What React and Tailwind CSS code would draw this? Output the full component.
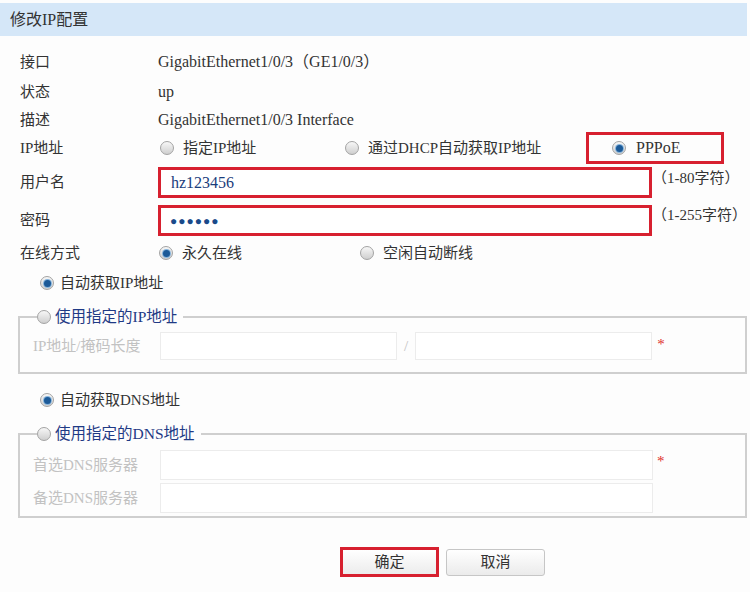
import React from 'react';

const Radio = ({ checked }) => (
  <span className="inline-flex w-[14px] h-[14px] shrink-0 items-center justify-center rounded-full border border-[#a3a3a3] bg-linear-to-b from-[#f7f7f7] to-[#cfcfcf]">
    {checked && <span className="w-[7px] h-[7px] rounded-full bg-[#1c5a98] ring-1 ring-[#86b4dc]" />}
  </span>
);

const Option = ({ checked, children, className = '', gap = 'gap-[9px]' }) => (
  <div className={`flex items-center ${gap} ${className}`}>
    <Radio checked={checked} />
    <span>{children}</span>
  </div>
);

const Row = ({ label, className = '', children }) => (
  <div className={`flex items-center pl-[20px] ${className}`}>
    <div className="w-[138px] shrink-0">{label}</div>
    {children}
  </div>
);

const Legend = ({ children }) => (
  <legend className="ml-[17px] pr-[6px]">
    <span className="inline-flex items-center gap-[4px] h-[20px] text-[#1f3a85] text-[15.5px]">
      <Radio />
      <span>{children}</span>
    </span>
  </legend>
);

const Field = ({ w }) => <div className={`${w} h-full border border-[#ececec] bg-white`} />;

export default function App() {
  return (
    <div className="w-[750px] h-[592px] overflow-hidden bg-[#fdfdfd] text-[15px] leading-none text-[#333] font-['Liberation_Serif','Noto_Sans_CJK_SC',serif]">
      <div className="mt-[3px] w-[747px] h-[33px] bg-[#d5e7f8] flex items-center pl-[10px] text-[16px]">修改IP配置</div>

      <div className="pt-[11px]">
        <Row label="接口" className="h-[30px]"><span className="text-[16px]">GigabitEthernet1/0/3（GE1/0/3）</span></Row>
        <Row label="状态" className="h-[30px]"><span className="text-[16px]">up</span></Row>
        <Row label="描述" className="h-[26px]"><span className="text-[16px]">GigabitEthernet1/0/3 Interface</span></Row>
        <Row label="IP地址" className="h-[30px]">
          <Option className="w-[187px] pl-[2px]">指定IP地址</Option>
          <Option className="w-[241px]">通过DHCP自动获取IP地址</Option>
          <div className="w-[138px] h-[32px] border-[3px] border-[#d7202f] flex items-center pl-[23px]">
            <Option checked gap="gap-[10px]"><span className="text-[16px]">PPPoE</span></Option>
          </div>
        </Row>
        <Row label="用户名" className="mt-[4px] h-[31px]">
          <div className="w-[494px] h-full border-[3px] border-[#d7202f] bg-white flex items-center pl-[10px] text-[16px] text-[#1a3d7c]">hz123456</div>
          <span className="self-start pt-[4px]">（1-80字符）</span>
        </Row>
        <Row label="密码" className="mt-[7px] h-[31px]">
          <div className="w-[494px] h-full border-[3px] border-[#d7202f] bg-white flex items-center pl-[9px] text-[#1a4a8a] text-[12px] tracking-[1px]">●●●●●●</div>
          <span className="self-start pt-[3px]">（1-255字符）</span>
        </Row>
        <Row label="在线方式" className="mt-[3px] h-[28px]">
          <Option checked className="w-[202px] pl-[1px]">永久在线</Option>
          <Option>空闲自动断线</Option>
        </Row>
      </div>

      <div className="mt-[3px] h-[26px] pl-[40px] flex items-center">
        <Option checked gap="gap-[6px]">自动获取IP地址</Option>
      </div>

      <fieldset className="mt-[11px] ml-[18px] w-[729px] border-2 border-[#cfcfcf]">
        <Legend>使用指定的IP地址</Legend>
        <div className="pt-[5px] pb-[12px]">
          <div className="flex items-center h-[28px] pl-[13px]">
            <div className="w-[127px] text-[#c2c2c2]">IP地址/掩码长度</div>
            <Field w="w-[237px]" />
            <span className="mx-[7px] text-[#c2c2c2]">/</span>
            <Field w="w-[237px]" />
            <span className="ml-[5px] self-start pt-[5px] text-[#e0302a]">*</span>
          </div>
        </div>
      </fieldset>

      <div className="mt-[13px] h-[26px] pl-[40px] flex items-center">
        <Option checked gap="gap-[6px]">自动获取DNS地址</Option>
      </div>

      <fieldset className="mt-[11px] ml-[18px] w-[729px] border-2 border-[#cfcfcf]">
        <Legend>使用指定的DNS地址</Legend>
        <div className="pt-[6px] pb-[3px] flex flex-col gap-[3px]">
          <div className="flex items-center h-[30px] pl-[13px]">
            <div className="w-[127px] text-[#c2c2c2]">首选DNS服务器</div>
            <Field w="w-[493px]" />
            <span className="ml-[4px] self-start pt-[4px] text-[#e0302a]">*</span>
          </div>
          <div className="flex items-center h-[30px] pl-[13px]">
            <div className="w-[127px] text-[#c2c2c2]">备选DNS服务器</div>
            <Field w="w-[493px]" />
          </div>
        </div>
      </fieldset>

      <div className="mt-[29px] pl-[340px] flex items-center gap-[7px]">
        <div className="w-[99px] h-[30px] border-[3px] border-[#d7202f] bg-linear-to-b from-white to-[#ececec] flex items-center justify-center text-[15px]">确定</div>
        <div className="w-[99px] h-[27px] border border-[#c6c6c6] rounded-[3px] bg-linear-to-b from-white to-[#ebebeb] flex items-center justify-center text-[15px]">取消</div>
      </div>
    </div>
  );
}
